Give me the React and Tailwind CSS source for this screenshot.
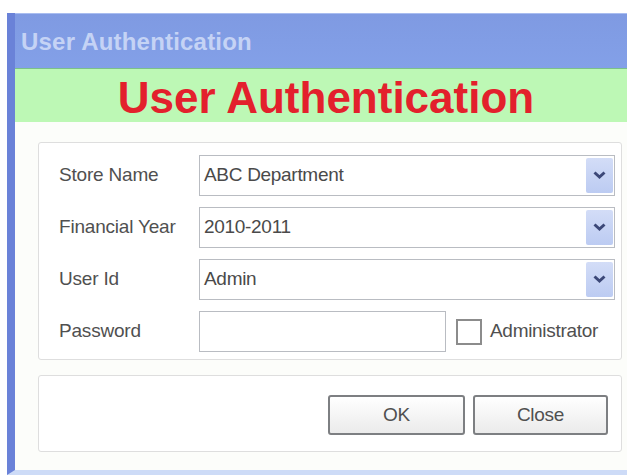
import { useState } from "react";

const font = { fontFamily: '"Liberation Sans", Arial, sans-serif' };

function Chevron() {
  return (
    <svg width="13" height="9" viewBox="0 0 13 9">
      <path d="M1.5 1.5 L6.5 6 L11.5 1.5" fill="none" stroke="#3c4878" strokeWidth="3" />
    </svg>
  );
}

function Combo({ value }) {
  return (
    <div className="flex h-full flex-1 items-stretch border border-[#b9bcc2] bg-white">
      <div className="flex flex-1 items-center pl-[4px] text-[19px] tracking-[-0.3px] text-[#4a4a4a]">{value}</div>
      <div className="my-[2px] mr-[1px] flex w-[27px] items-center justify-center rounded-[2px] bg-gradient-to-b from-[#d3ddf7] to-[#bccbf2]">
        <Chevron />
      </div>
    </div>
  );
}

function Row({ label, children }) {
  return (
    <div className="flex h-[41px] items-center">
      <div className="w-[140px] text-[19px] tracking-[-0.2px] text-[#505050]">{label}</div>
      {children}
    </div>
  );
}

export default function App() {
  const [admin, setAdmin] = useState(false);

  return (
    <div className="h-[475px] w-[627px] overflow-hidden bg-white pl-[7px] pt-[13px]" style={font}>
      <div className="flex h-[462px] flex-col border-b-[5px] border-l-[8px] border-b-[#cddbf7] border-l-[#6a82d8]">
        {/* title bar */}
        <div className="flex h-[55px] items-center border-t border-[#a9bdf0] bg-gradient-to-b from-[#7f9ae2] to-[#83a0e8] pl-[6px] pt-[1px]">
          <span className="text-[24px] font-bold tracking-[0.2px] text-[#c5d3f5]">User Authentication</span>
        </div>

        {/* heading band */}
        <div className="flex h-[54px] items-center justify-center border-t border-[#7bc08a] bg-[#bdf8b5] pl-[10px] pt-[5px]">
          <span className="text-[44px] font-bold leading-none text-[#e3202c]">User Authentication</span>
        </div>

        <div className="flex flex-1 flex-col bg-[#fcfdfa] pl-[23px] pr-[5px] pt-[20px]">
          {/* login fields */}
          <div className="flex h-[218px] flex-col gap-[11px] rounded-[3px] border border-[#dedede] bg-white pl-[20px] pr-[6px] pt-[12px]">
            <Row label="Store Name">
              <Combo value="ABC Department" />
            </Row>
            <Row label="Financial Year">
              <Combo value="2010-2011" />
            </Row>
            <Row label="User Id">
              <Combo value="Admin" />
            </Row>
            <Row label="Password">
              <input
                type="password"
                className="h-full w-[247px] border border-[#b9bcc2] bg-white px-1 outline-none"
              />
              <label className="ml-[10px] flex cursor-pointer items-center gap-[8px] text-[19px] tracking-[-0.3px] text-[#505050]">
                <span
                  onClick={() => setAdmin(!admin)}
                  className="flex h-[26px] w-[26px] items-center justify-center border-2 border-[#8c8c8c] bg-white text-[16px] leading-none"
                >
                  {admin ? "✓" : ""}
                </span>
                Administrator
              </label>
            </Row>
          </div>

          {/* buttons */}
          <div className="mt-[15px] flex h-[77px] justify-end gap-[8px] rounded-[3px] border border-[#dedede] bg-white pr-[13px] pt-[19px]">
            <button className="h-[40px] w-[137px] rounded-[3px] border-2 border-[#7d7f82] bg-gradient-to-b from-white to-[#ebebeb] text-[19px] tracking-[-0.3px] text-[#505050]">
              OK
            </button>
            <button className="h-[40px] w-[135px] rounded-[3px] border-2 border-[#7d7f82] bg-gradient-to-b from-white to-[#ebebeb] text-[19px] tracking-[-0.3px] text-[#505050]">
              Close
            </button>
          </div>
        </div>
      </div>
    </div>
  );
}
